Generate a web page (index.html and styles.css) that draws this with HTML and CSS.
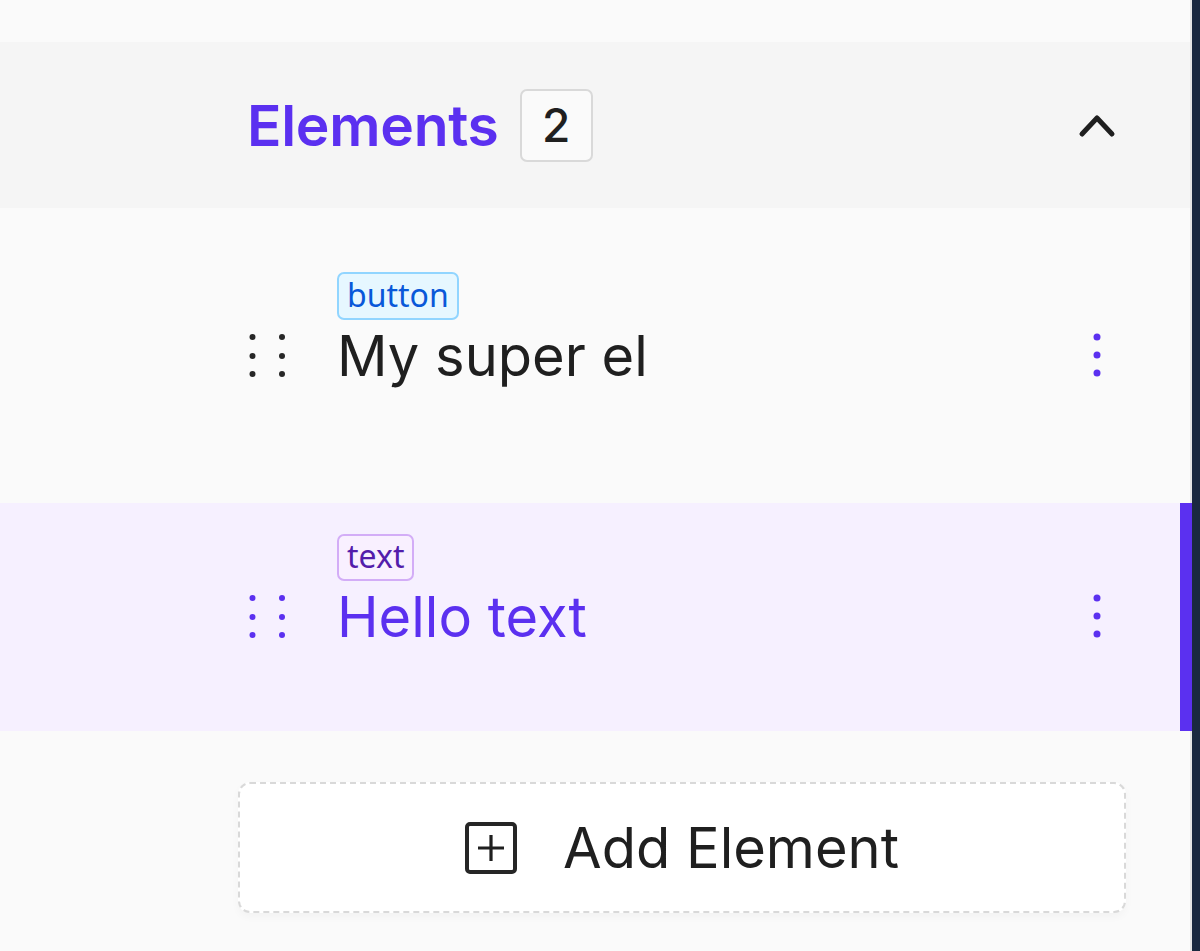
FILE: index.html
```html
<!DOCTYPE html>
<html lang="en">
<head>
<meta charset="utf-8">
<title>Elements</title>
<link rel="stylesheet" href="styles.css">
</head>
<body>
<div class="app">
  <div class="panel">
    <div class="top-gap"></div>
    <div class="section-header">
      <div class="title-group">
        <span class="section-title">Elements</span>
        <span class="count-badge">2</span>
      </div>
      <svg class="chevron" viewBox="0 0 40 40" width="40" height="40" aria-hidden="true">
        <polyline points="5,29 20,13 35,29" fill="none" stroke="#1f1f1f" stroke-width="5" stroke-linecap="round" stroke-linejoin="round"/>
      </svg>
    </div>

    <div class="row row-first">
      <svg class="handle" viewBox="0 0 40 44" width="40" height="44" aria-hidden="true">
        <g fill="#262626">
          <circle cx="5.5" cy="3" r="3"/><circle cx="35" cy="3" r="3"/>
          <circle cx="5.5" cy="22" r="3"/><circle cx="35" cy="22" r="3"/>
          <circle cx="5.5" cy="40" r="3"/><circle cx="35" cy="40" r="3"/>
        </g>
      </svg>
      <div class="row-content">
        <span class="tag tag-blue">button</span>
        <span class="row-title">My super el</span>
      </div>
      <svg class="kebab" viewBox="0 0 20 48" width="20" height="48" aria-hidden="true">
        <g fill="#5b30f0">
          <circle cx="10" cy="5" r="3.5"/><circle cx="10" cy="23" r="3.5"/><circle cx="10" cy="41" r="3.5"/>
        </g>
      </svg>
    </div>

    <div class="row row-active">
      <svg class="handle" viewBox="0 0 40 44" width="40" height="44" aria-hidden="true">
        <g fill="#5b30f0">
          <circle cx="5.5" cy="3" r="3"/><circle cx="35" cy="3" r="3"/>
          <circle cx="5.5" cy="22" r="3"/><circle cx="35" cy="22" r="3"/>
          <circle cx="5.5" cy="40" r="3"/><circle cx="35" cy="40" r="3"/>
        </g>
      </svg>
      <div class="row-content">
        <span class="tag tag-purple">text</span>
        <span class="row-title row-title-active">Hello text</span>
      </div>
      <svg class="kebab" viewBox="0 0 20 48" width="20" height="48" aria-hidden="true">
        <g fill="#5b30f0">
          <circle cx="10" cy="5" r="3.5"/><circle cx="10" cy="23" r="3.5"/><circle cx="10" cy="41" r="3.5"/>
        </g>
      </svg>
    </div>

    <div class="add-wrap">
      <button class="add-button" type="button">
        <svg class="add-icon" viewBox="0 0 52 52" width="52" height="52" aria-hidden="true">
          <rect x="2" y="2" width="48" height="48" rx="3" fill="none" stroke="#262626" stroke-width="4"/>
          <path d="M13 26 H39 M26 13 V39" stroke="#1f1f1f" stroke-width="3.2" stroke-linecap="butt"/>
        </svg>
        <span class="add-label">Add Element</span>
      </button>
    </div>
  </div>
  <div class="side-strip"></div>
</div>
</body>
</html>
```

FILE: styles.css
```css
* {
  box-sizing: border-box;
}

html, body {
  margin: 0;
  padding: 0;
}

body {
  background: #fafafa;
  font-family: Inter, "Liberation Sans", Arial, sans-serif;
  color: #1f1f1f;
  overflow: hidden;
}

.app {
  display: flex;
  width: 1200px;
  height: 951px;
}

.panel {
  width: 1192px;
  flex: none;
  background: #fafafa;
  border-right: 2px solid #e6e6e6;
  display: flex;
  flex-direction: column;
}

.side-strip {
  flex: 1;
  background: #1a2940;
}

.top-gap {
  height: 42px;
  flex: none;
}

.section-header {
  height: 166px;
  flex: none;
  background: #f5f5f5;
  display: flex;
  align-items: center;
  justify-content: space-between;
  padding: 0 73px 0 247px;
}

.title-group {
  display: flex;
  align-items: center;
  gap: 21px;
}

.section-title {
  font-size: 57px;
  font-weight: 600;
  color: #5b30f0;
  letter-spacing: -0.3px;
  line-height: 1;
}

.count-badge {
  width: 73px;
  height: 73px;
  border: 2px solid #d9d9d9;
  border-radius: 7px;
  background: #fafafa;
  display: flex;
  align-items: center;
  justify-content: center;
  font-size: 46px;
  font-weight: 500;
  color: #1f1f1f;
}

.chevron {
  display: block;
}

.row {
  display: flex;
  align-items: center;
  padding: 0 83px 0 247px;
}

.row-first {
  height: 295px;
}

.row-active {
  height: 228px;
  background: #f6f0ff;
  margin-right: -2px;
  border-right: 12px solid #5b30f0;
  padding-right: 73px;
}

.handle {
  flex: none;
  display: block;
}

.row-content {
  flex: 1;
  display: flex;
  flex-direction: column;
  align-items: flex-start;
  gap: 4px;
  margin-left: 50px;
  padding-bottom: 52px;
}

.tag {
  height: 48px;
  display: inline-flex;
  align-items: center;
  padding: 0 8px 2px;
  border: 2px solid;
  border-radius: 7px;
  font-family: "Noto Sans", "Open Sans", sans-serif;
  font-size: 32px;
  font-weight: 400;
  line-height: 1;
}

.tag-blue {
  background: #e6f7ff;
  border-color: #91d5ff;
  color: #0958d9;
}

.tag-purple {
  height: 47px;
  background: #f9f0ff;
  border-color: #d3adf7;
  color: #531dab;
}

.row-title {
  font-size: 56px;
  line-height: 64px;
  font-weight: 400;
  color: #1f1f1f;
  white-space: nowrap;
}

.row-title-active {
  color: #5b30f0;
}

.kebab {
  flex: none;
  display: block;
}

.add-wrap {
  padding: 51px 64px 0 238px;
}

.add-button {
  width: 888px;
  height: 131px;
  background: #ffffff;
  border: 2px dashed #d9d9d9;
  border-radius: 12px;
  box-shadow: 0 4px 8px rgba(0, 0, 0, 0.03);
  display: flex;
  align-items: center;
  justify-content: center;
  gap: 46px;
  font-family: inherit;
  cursor: pointer;
  padding: 0;
}

.add-icon {
  display: block;
  flex: none;
}

.add-label {
  font-size: 56px;
  font-weight: 400;
  color: #1f1f1f;
  line-height: 1;
}
```
